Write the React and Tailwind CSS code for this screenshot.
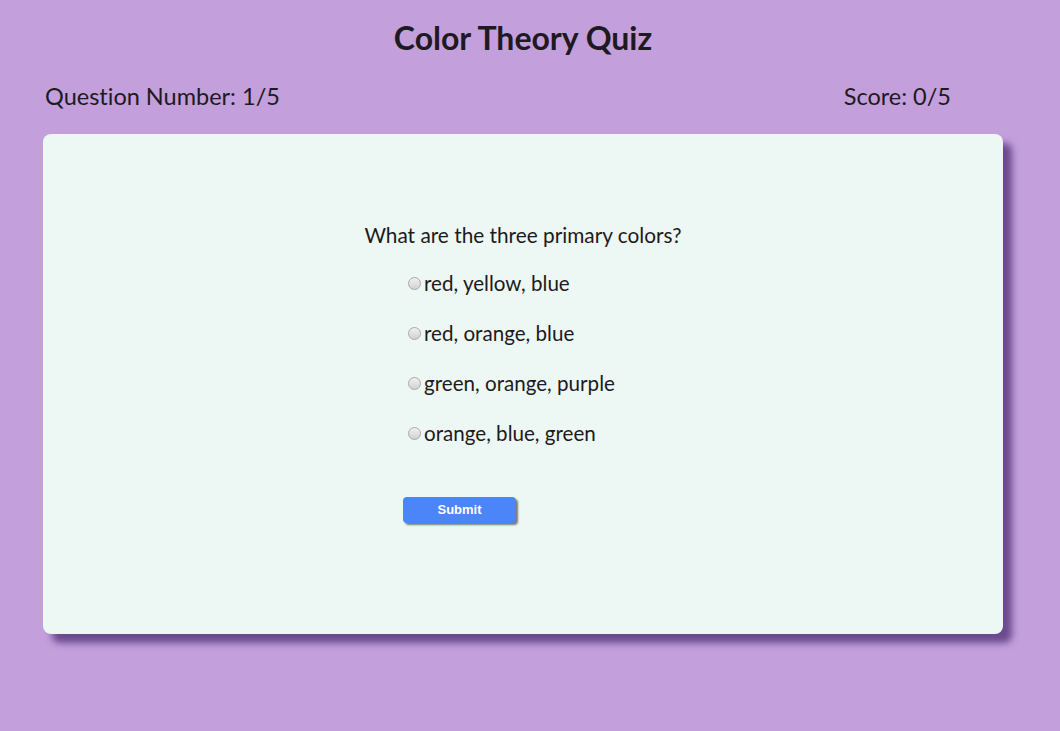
export default function App() {
  const options = [
    "red, yellow, blue",
    "red, orange, blue",
    "green, orange, purple",
    "orange, blue, green",
  ];
  return (
    <div className="min-h-[731px] w-full bg-[#c39fdb] text-[#1d1a21] [font-variant-ligatures:none]" style={{ fontFamily: "Lato, 'Noto Sans', sans-serif" }}>
      <div className="ml-[43px] w-[960px] pt-[18px]">
        <h1 className="text-center text-[32px] font-bold leading-[40px]">Color Theory Quiz</h1>
        <div className="mt-[24px] flex items-center justify-between pl-[2px] pr-[52px] text-[23.5px] leading-[28px]">
          <span>Question Number: 1/5</span>
          <span>Score: 0/5</span>
        </div>
        <div className="mt-[24px] h-[500px] rounded-[8px] bg-[#edf7f3] shadow-[9px_9px_7px_#6b4a8e]">
          <div className="pt-[89px] text-center text-[20.8px] leading-[24px]">What are the three primary colors?</div>
          <div className="ml-[365px] mt-[24px] flex flex-col gap-[26px]">
            {options.map((o) => (
              <label key={o} className="flex h-[24px] items-center text-[20.6px] leading-[24px]">
                <span className="mr-[3px] h-[13px] w-[13px] rounded-full border border-[#a9a9a9] bg-gradient-to-b from-[#f0f0f0] to-[#d2d2d2]" />
                {o}
              </label>
            ))}
          </div>
          <button className="ml-[360px] mt-[52px] flex h-[26px] w-[113px] items-center justify-center rounded-[4px] bg-[#4a86f7] text-[13px] font-bold text-white shadow-[2px_2px_2px_#7a7a7a]" style={{ fontFamily: "'Liberation Sans', Arial, sans-serif" }}>
            Submit
          </button>
        </div>
      </div>
    </div>
  );
}
